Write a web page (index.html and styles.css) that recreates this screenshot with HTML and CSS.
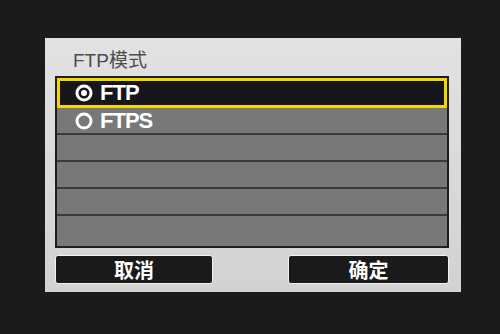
FILE: index.html
```html
<!DOCTYPE html>
<html lang="zh-CN">

<head>
    <meta charset="UTF-8">
    <meta name="viewport" content="width=device-width, initial-scale=1.0">
    <title>FTP模式</title>
    <link rel="stylesheet" href="styles.css">
</head>

<body>
    <div class="dialog">
        <div class="dialog-title">FTP模式</div>
        <div class="option-list">
            <div class="option selected">
                <svg class="radio" viewBox="0 0 18 18" width="18" height="18">
                    <circle cx="9" cy="9" r="7" fill="none" stroke="#fff" stroke-width="3" />
                    <circle cx="9" cy="9" r="3" fill="#fff" />
                </svg>
                <span>FTP</span>
            </div>
            <div class="option">
                <svg class="radio" viewBox="0 0 18 18" width="18" height="18">
                    <circle cx="9" cy="9" r="7" fill="none" stroke="#fff" stroke-width="3" />
                </svg>
                <span>FTPS</span>
            </div>
            <div class="option"></div>
            <div class="option"></div>
            <div class="option"></div>
            <div class="option"></div>
        </div>
        <div class="actions">
            <button class="btn">取消</button>
            <button class="btn">确定</button>
        </div>
    </div>
</body>

</html>
```

FILE: styles.css
```css
body {
    margin: 0;
    padding: 38px 0 0 45px;
    background: #1b1b1b;
    font-family: "Liberation Sans", "Noto Sans CJK SC", sans-serif;
    height: 334px;
    box-sizing: border-box;
    overflow: hidden;
}

.dialog {
    width: 416px;
    height: 254px;
    box-sizing: border-box;
    padding: 0 12px 0 10px;
    background: linear-gradient(to bottom, #e2e2e2, #d2d2d2);
    display: flex;
    flex-direction: column;
}

.dialog-title {
    height: 38px;
    box-sizing: border-box;
    padding: 12px 0 0 18px;
    font-size: 19px;
    line-height: 22px;
    color: #4c4c4c;
}

.option-list {
    height: 172px;
    box-sizing: border-box;
    border: 2px solid #1e1e1e;
    background: #787878;
    display: flex;
    flex-direction: column;
}

.option {
    height: 28px;
    flex: none;
    box-sizing: border-box;
    border-bottom: 2px solid #3a3a3a;
    display: flex;
    align-items: center;
    padding-left: 18px;
    color: #fff;
    font-size: 22px;
    font-weight: bold;
    letter-spacing: -1px;
}

.option:last-child {
    border-bottom: none;
}

.option.selected {
    height: 30px;
    border: 3px solid #f2d800;
    background: #17161e;
    padding-left: 15px;
}

.option + .option {
    height: 27px;
}

.radio {
    margin-right: 7px;
}

.actions {
    display: flex;
    justify-content: space-between;
    margin-top: 7px;
}

.btn {
    width: 158px;
    height: 29px;
    background: #1a1a1a;
    border: 1px solid #f2f2f2;
    border-radius: 3px;
    color: #fff;
    font-family: "Noto Sans CJK SC", sans-serif;
    font-size: 20px;
    font-weight: bold;
    padding: 0;
    line-height: 26px;
}

.btn:last-child {
    width: 161px;
}
```
